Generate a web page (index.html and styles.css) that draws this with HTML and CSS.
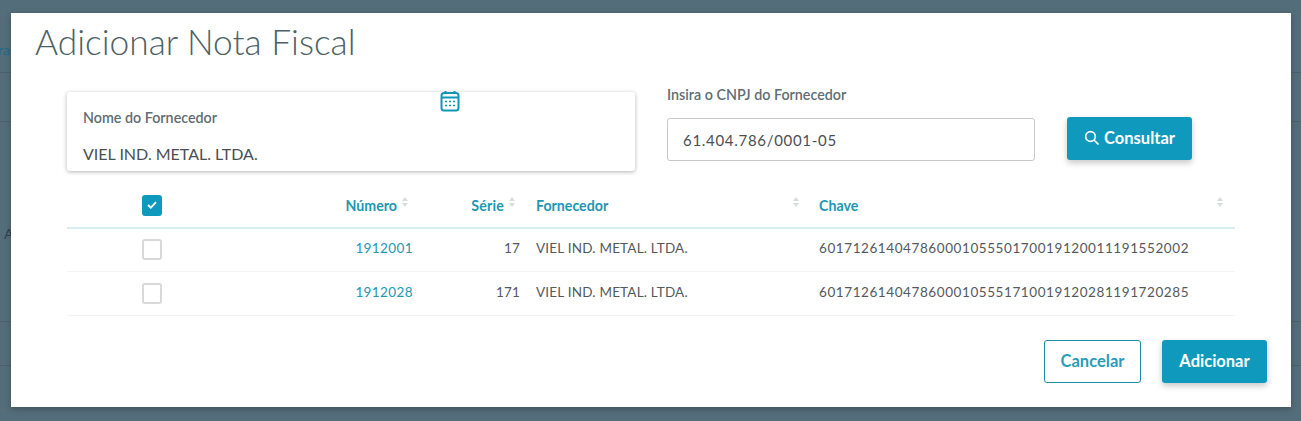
FILE: index.html
```html
<!DOCTYPE html>
<html lang="pt-BR">
<head>
<meta charset="utf-8">
<title>Adicionar Nota Fiscal</title>
<link rel="stylesheet" href="styles.css">
</head>
<body>
<div class="backdrop">
  <div class="bg-row bg-row-head"><span class="bg-link">ora</span></div>
  <div class="bg-row bg-row-a"></div>
  <div class="bg-row bg-row-b"><span class="bg-text">A</span></div>
  <div class="bg-row bg-row-c"></div>
  <div class="bg-row bg-row-d"></div>
</div>
<section class="modal">
  <h1 class="title">Adicionar Nota Fiscal</h1>
  <div class="form-row">
    <div class="card">
      <svg class="cal-icon" width="20" height="22" viewBox="0 0 20 22" fill="none" stroke="#1196b8" stroke-width="2">
        <rect x="1.5" y="3" width="17" height="17.5" rx="2.5"/>
        <path d="M1.5 7.5h17M5.5 1v3M14.500 1v3"/>
        <path d="M5 11.500h2M9 11.500h2M13 11.500h2M5 15.500h2M9 15.500h2M13 15.500h2" stroke-width="1.500"/>
      </svg>
      <div class="label">Nome do Fornecedor</div>
      <div class="card-value">VIEL IND. METAL. LTDA.</div>
    </div>
    <div class="cnpj">
      <div class="label">Insira o CNPJ do Fornecedor</div>
      <div class="input">61.404.786/0001-05</div>
    </div>
    <button class="btn btn-primary btn-search" type="button">
      <svg width="16" height="16" viewBox="0 0 16 16" fill="none" stroke="#fff" stroke-width="1.700"><circle cx="6.500" cy="6.500" r="4.800"/><path d="M10 10l4.500 4.500"/></svg>
      Consultar
    </button>
  </div>
  <table class="grid">
    <colgroup>
      <col class="c-check"><col class="c-num"><col class="c-serie"><col class="c-forn"><col class="c-chave">
    </colgroup>
    <thead>
      <tr>
        <th><span class="check check-on"><svg width="10" height="8" viewBox="0 0 10 8" fill="none" stroke="#fff" stroke-width="1.800"><path d="M1 4l2.800 2.700L9 1.200"/></svg></span></th>
        <th><div class="th th-end">Número<svg class="sort" width="6" height="10" viewBox="0 0 6 10"><path d="M3 0l3 4H0zM3 10L0 6h6z"/></svg></div></th>
        <th><div class="th th-end th-serie">Série<svg class="sort" width="6" height="10" viewBox="0 0 6 10"><path d="M3 0l3 4H0zM3 10L0 6h6z"/></svg></div></th>
        <th><div class="th th-between">Fornecedor<svg class="sort" width="6" height="10" viewBox="0 0 6 10"><path d="M3 0l3 4H0zM3 10L0 6h6z"/></svg></div></th>
        <th><div class="th th-between">Chave<svg class="sort" width="6" height="10" viewBox="0 0 6 10"><path d="M3 0l3 4H0zM3 10L0 6h6z"/></svg></div></th>
      </tr>
    </thead>
    <tbody>
      <tr>
        <td><span class="check"></span></td>
        <td class="num num-link"><a class="link">1912001</a></td>
        <td class="num">17</td>
        <td>VIEL IND. METAL. LTDA.</td>
        <td class="key">60171261404786000105550170019120011191552002</td>
      </tr>
      <tr>
        <td><span class="check"></span></td>
        <td class="num num-link"><a class="link">1912028</a></td>
        <td class="num">171</td>
        <td>VIEL IND. METAL. LTDA.</td>
        <td class="key">60171261404786000105551710019120281191720285</td>
      </tr>
    </tbody>
  </table>
  <div class="actions">
    <button class="btn btn-outline" type="button">Cancelar</button>
    <button class="btn btn-primary btn-add" type="button">Adicionar</button>
  </div>
</section>
</body>
</html>
```
FILE: styles.css
```css
* { box-sizing: border-box; }
html, body { margin: 0; height: 421px; overflow: hidden; }
body {
  position: relative;
  background: #546d7a;
  font-family: "Lato", "Noto Sans", sans-serif;
  color: #4f5b62;
}
.backdrop { display: flex; flex-direction: column; height: 421px; }
.bg-row { border-bottom: 1px solid #4a626e; flex: none; }
.bg-row-head { height: 73px; padding-top: 42px; }
.bg-row-a { height: 49px; }
.bg-row-b { height: 200px; padding-top: 104px; }
.bg-row-c { height: 44px; }
.bg-row-d { border: 0; height: 55px; }
.bg-link { display: block; margin-left: -10px; font-size: 14px; color: #1f6a86; line-height: 16px; }
.bg-text { display: block; margin-left: 4px; font-size: 14px; color: #2f434d; line-height: 16px; }
.modal {
  position: absolute;
  left: 11px;
  top: 13px;
  width: 1280px;
  height: 394px;
  background: #fff;
  box-shadow: 0 2px 6px rgba(0, 0, 0, .25);
  padding: 0 24px 0 24px;
}
.title {
  margin: 0;
  padding-top: 8px;
  height: 79px;
  font-size: 35.300px;
  line-height: 42px;
  font-weight: 300;
  color: #4e5f67;
}
.form-row { display: flex; align-items: flex-start; margin-left: 32px; height: 91px; }
.card {
  position: relative;
  width: 568px;
  height: 79px;
  flex: none;
  padding: 17px 16px 0;
  border-radius: 3px;
  background: #fff;
  box-shadow: 0 1px 4px rgba(0, 0, 0, .3);
}
.label { font-size: 14.300px; line-height: 18px; font-weight: 600; color: #5f6d74; }
.card-value { margin-top: 18px; font-size: 16px; line-height: 18px; color: #4a4f53; }
.cal-icon { position: absolute; left: 373px; top: -2px; }
.cnpj { width: 368px; flex: none; margin-left: 32px; margin-top: -7px; }
.cnpj .label { height: 33px; padding-top: 1px; }
.input {
  height: 43px;
  padding: 0 15px;
  border: 1px solid #c5c9cc;
  border-radius: 3px;
  font-size: 15px;
  line-height: 43px;
  color: #4a4f53;
  letter-spacing: .7px;
}
.btn {
  display: inline-flex;
  align-items: center;
  justify-content: center;
  height: 43px;
  padding: 0;
  border-radius: 3px;
  font-family: inherit;
  font-size: 16.500px;
  font-weight: 700;
  cursor: pointer;
}
.btn-primary {
  border: 0;
  background: #0f9abd;
  color: #fff;
  box-shadow: 0 3px 6px rgba(0, 0, 0, .22);
}
.btn-search { width: 125px; margin-left: 32px; margin-top: 25px; gap: 4px; padding-bottom: 2px; }
.btn-outline { width: 97px; background: #fff; border: 1px solid #1a8ca9; color: #2a9cb8; }
.btn-add { width: 105px; }
.grid {
  width: 1168px;
  margin-left: 32px;
  border-collapse: collapse;
  table-layout: fixed;
  font-size: 13.500px;
}
.c-check { width: 170px; }
.c-num { width: 183px; }
.c-serie { width: 108px; }
.c-forn { width: 283px; }
.c-chave { width: 424px; }
th {
  height: 45px;
  padding: 0 8px;
  border-bottom: 2px solid #d9eef2;
  font-weight: 700;
  color: #2197b4;
  text-align: left;
}
th:first-child, td:first-child { padding: 0 0 0 75px; }
td { padding: 0 8px 3px; color: #53595d; border-bottom: 1px solid #f2f4f5; letter-spacing: .2px; }
tbody tr { height: 44px; }
tbody tr:first-child { height: 43px; }
.th { display: flex; align-items: center; height: 26px; font-size: 14.200px; }
.th-end { justify-content: flex-end; gap: 5px; padding-right: 4px; }
.th-serie { padding-right: 5px; gap: 5px; letter-spacing: .2px; }
.th-between { justify-content: space-between; padding-right: 4px; }
.sort { fill: #d8dcde; margin-top: -7px; }
.num { text-align: right; }
.num-link { padding-right: 7px; }
.key { letter-spacing: .58px; }
.link { color: #2597b3; letter-spacing: .4px; }
.check {
  display: flex;
  align-items: center;
  justify-content: center;
  width: 20px;
  height: 21px;
  border: 2px solid #d7d9da;
  border-radius: 3px;
  background: #fff;
}
.check-on { background: #0f9abd; border-color: #0f9abd; }
.actions { display: flex; justify-content: flex-end; gap: 21px; margin-top: 24px; }
```
